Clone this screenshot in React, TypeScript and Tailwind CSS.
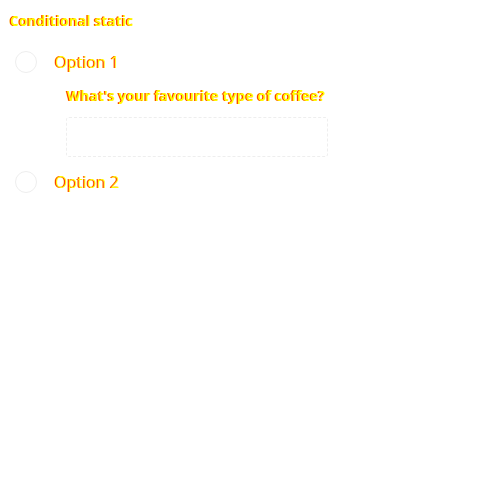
const txt = "text-[#ffff00] [text-shadow:-1px_0_#ff0000]";

function Radio({ label }: { label: string }) {
  return (
    <label className="flex items-center gap-[18px] pl-[5px]">
      <span className="w-[22px] h-[22px] rounded-full border border-[#eeeeee] bg-white" />
      <span className={`text-[16px] ${txt}`}>{label}</span>
    </label>
  );
}

export default function App() {
  return (
    <div className="min-h-[500px] bg-white font-['Open_Sans',sans-serif] px-[10px] pt-[11px]">
      <h1 className={`text-[14px] font-bold leading-[20px] ${txt}`}>
        Conditional static
      </h1>
      <div className="mt-[19px] flex flex-col">
        <Radio label="Option 1" />
        <div className="pl-[56px] pt-[12px] pb-[13px]">
          <p className={`pl-[1px] text-[14px] font-bold leading-[20px] ${txt}`}>
            What's your favourite type of coffee?
          </p>
          <div className="mt-[11px] w-[262px] h-[40px] rounded-[3px] border border-dashed border-[#eeeeee]" />
        </div>
        <Radio label="Option 2" />
      </div>
    </div>
  );
}
